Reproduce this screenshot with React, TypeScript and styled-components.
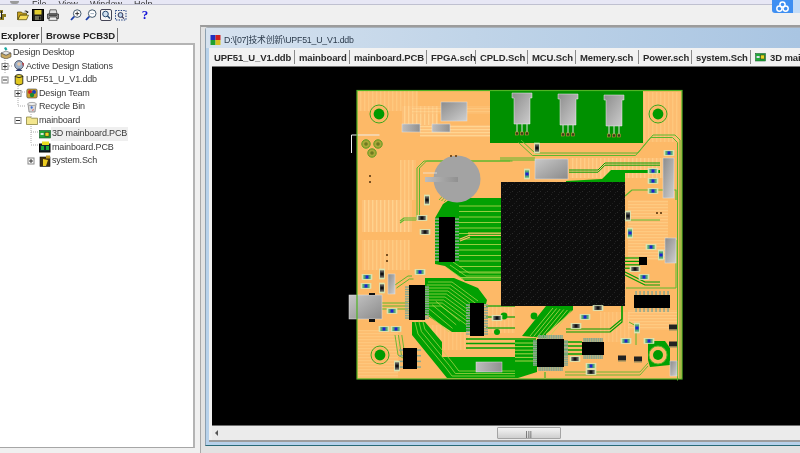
import React from "react";
import styled, { createGlobalStyle } from "styled-components";

const Global = createGlobalStyle`
  html, body { margin: 0; padding: 0; background: #f0f0f0; overflow: hidden; }
  #root { width: 800px; height: 453px; }
`;
const Page = styled.div`
  position: relative; width: 800px; height: 453px; overflow: hidden; background: #f0f0f0;
  display: flex; flex-direction: column; font-family: "Liberation Sans", "Noto Sans CJK SC", sans-serif; color: #222;
  filter: blur(0.3px);
`;
const MenuBar = styled.div`
  height: 4px; flex: none; background: #e7e7f5; border-bottom: 1px solid #bfc0d0; overflow: hidden;
  display: flex; align-items: flex-end; padding-left: 10px; gap: 12px; font-size: 9px; line-height: 9px; color: #333;
`;
const MenuItem = styled.span`
  transform: translateY(5px);
`;
const MenuBlob = styled.span`
  width: 9px; height: 3px; background: #9a9a9a; margin-right: 1px; border-radius: 0 0 5px 5px; flex: none;
`;
const Cloud = styled.div`
  position: absolute; right: 0; top: 0; width: 28px; height: 13px; display: flex; border-radius: 0 0 0 3px; overflow: hidden;
`;
const CloudMain = styled.div`
  width: 21px; background: #3f8ff2; display: flex; align-items: center; justify-content: center;
`;
const CloudEdge = styled.div`
  flex: 1; background: #c3dcf8;
`;
const Toolbar = styled.div`
  height: 21px; box-sizing: border-box; padding: 0 0 1px 17px; flex: none; display: flex; align-items: center; position: relative;
`;
const ToolGroup = styled.div<{ $left: number; $gap: number }>`
  display: flex; gap: ${p => p.$gap}px; margin-left: ${p => p.$left}px;
`;
const Tool = styled.svg`
  width: 12px; height: 12px; display: block; flex: none;
`;
const HelpMark = styled.span`
  font: bold 13px "Liberation Serif", serif; color: #1414d8; width: 8px; text-align: center; line-height: 12px;
`;
const Main = styled.div`
  flex: 1; display: flex; min-height: 0;
`;
const Side = styled.aside`
  width: 195px; flex: none; display: flex; flex-direction: column; padding-bottom: 5px;
`;
const SideTabs = styled.div`
  height: 17px; flex: none; display: flex; align-items: flex-end; gap: 2px;
`;
const SideTab = styled.div<{ $active?: boolean }>`
  height: ${p => (p.$active ? 17 : 14)}px; font: bold 9.5px "Liberation Sans", sans-serif;
  padding: ${p => (p.$active ? "0 3px 0 1px" : "0 3px 0 2px")}; display: flex; align-items: center; white-space: nowrap;
  border-right: 1px solid #777; color: #222;
  background: ${p => (p.$active ? "#f4f4f4" : "#f0f0f0")};
  width: ${p => (p.$active ? 37 : 68)}px;
  margin-bottom: ${p => (p.$active ? -1 : 1)}px;
`;
const TreeBox = styled.div`
  flex: 1; position: relative; background: #fff; padding-top: 1px; border-top: 2px solid #b4b4b4; border-right: 2px solid #b4b4b4; border-bottom: 1px solid #a6a6a6;
`;
const TreeLines = styled.svg`
  position: absolute; left: 0; top: -1px; width: 60px; height: 130px; pointer-events: none;
`;
const Row = styled.div<{ $level: number }>`
  position: relative; height: 13.5px; display: flex; align-items: center; padding-left: ${p => p.$level * 13}px; font-size: 9px; color: #3a3a3a; white-space: nowrap;
`;
const RowIcon = styled.svg`
  width: 12px; height: 12px; flex: none;
`;
const RowLabel = styled.span<{ $selected?: boolean }>`
  background: ${p => (p.$selected ? "#efefef" : "transparent")}; padding: 0 1px; line-height: 13.5px; letter-spacing: -0.15px;
`;
const Workspace = styled.section`
  flex: 1; min-width: 0; display: flex; flex-direction: column; border-top: 2px solid #9c9c9c; margin-left: 5px; margin-top: -1px;
  padding-left: 4px; border-left: 1px solid #a8a8a8; background: #e2e2e2; padding-top: 1px;
`;
const Win = styled.div`
  flex: 1; display: flex; flex-direction: column; min-height: 0; background: #b7d1ea; margin-bottom: 7px;
  border-bottom: 1px solid #2a6a76; border-left: 1px solid #8da0b0; border-top-left-radius: 3px; box-shadow: 0 -1px 0 #a8b0b8;
`;
const TitleBar = styled.div`
  height: 20px; flex: none; box-sizing: border-box; display: flex; align-items: center; gap: 3px; padding: 3px 0 0 4px; font-size: 8.8px; letter-spacing: -0.2px; color: #2c3b4c;
  background: linear-gradient(90deg, #d6e2ef 0%, #c0d4e8 45%, #a9c5e2 100%);
`;
const TitleIcon = styled.svg`
  width: 11px; height: 11px; flex: none;
`;
const WinBody = styled.div`
  flex: 1; display: flex; flex-direction: column; margin-left: 3px; margin-bottom: 3px; background: #f0f0f0; padding-left: 1px; min-height: 0;
  border-bottom: 2px solid #9d9d9d;
`;
const TabStrip = styled.div`
  height: 18px; flex: none; display: flex; align-items: center; overflow: hidden; white-space: nowrap; background: #f2f2f2;
`;
const DocTab = styled.div<{ $w: number; $last?: boolean }>`
  width: ${p => p.$w}px; flex: none; height: 14px; display: flex; align-items: center; gap: 4px; padding-left: 4px; box-sizing: border-box;
  font: bold 9.5px "Liberation Sans", sans-serif; letter-spacing: -0.1px; color: #2a2a2a; border-right: ${p => (p.$last ? "none" : "1px solid #8a8a8a")};
`;
const DocIcon = styled.svg`
  width: 11px; height: 9px; flex: none;
`;
const CanvasWrap = styled.div`
  flex: 1; min-height: 0; margin-left: 2px; border-top: 1px solid #777; background: #000; display: flex; overflow: hidden;
`;
const Board = styled.svg`
  width: 588px; height: 359px; display: block; flex: none;
`;
const HScroll = styled.div`
  height: 14px; flex: none; margin-left: 2px; background: #ebebeb; border-top: 1px solid #6f6f6f; position: relative; display: flex; align-items: center;
`;
const ArrowLeft = styled.span`
  width: 0; height: 0; border-top: 3px solid transparent; border-bottom: 3px solid transparent; border-right: 3px solid #555; margin-left: 3px;
`;
const Thumb = styled.div`
  margin-left: 279px; width: 64px; height: 12px; box-sizing: border-box; border: 1px solid #a4a4a4; border-radius: 1px; display: flex; align-items: center; justify-content: center;
  background: linear-gradient(#f4f4f4, #cfcfcf); font: 7px "Liberation Sans", sans-serif; color: #333; letter-spacing: 0.4px;
`;

const Folder = () => <Tool viewBox="0 0 12 12"><path d="M0.5 3h4l1 1.2h4v2H3L1 10.5H.5z" fill="#c8a01c" stroke="#4a4000" strokeWidth=".7"/><path d="M3 6.2h8.5L9.5 10.7H1z" fill="#f6dc58" stroke="#4a4000" strokeWidth=".7"/><path d="M7 2.2q2-1.6 3.6.4l.6-.6v2H9.4l.6-.6q-1.2-1.4-3-1.2z" fill="#222"/></Tool>;
const Save = () => <Tool viewBox="0 0 12 12"><rect x=".5" y=".5" width="11" height="11" fill="#20201a" stroke="#000"/><rect x="2.5" y="1" width="7" height="4.5" fill="#e4cf30"/><rect x="3" y="7" width="6" height="4" fill="#70705a"/><rect x="7" y="7.5" width="1.5" height="3" fill="#111"/></Tool>;
const Print = () => <Tool viewBox="0 0 12 12"><path d="M3 .8h6.2l.8 4H2.2z" fill="#ddd" stroke="#333" strokeWidth=".7"/><path d="M.6 5h10.8v4.6H.6z" fill="#999" stroke="#222" strokeWidth=".8"/><path d="M2.6 8h6.8l.8 3.4H1.8z" fill="#eee" stroke="#333" strokeWidth=".7"/><path d="M2 6.3h8" stroke="#333"/></Tool>;
const Lens = ({ mark }: { mark: "plus" | "minus" }) => <Tool viewBox="0 0 12 12"><circle cx="7.2" cy="4.6" r="3.8" fill="#fff" stroke="#30485c" strokeWidth=".9"/><path d="M4.2 7.6 1 11" stroke="#1a3ea8" strokeWidth="1.8"/>{mark === "plus" && <path d="M7.2 2.6v4M5.2 4.6h4" stroke="#222" strokeWidth=".9"/>}{mark === "minus" && <path d="M5.4 4.6h3.6" stroke="#9ab" strokeWidth=".9"/>}</Tool>;
const Fit = () => <Tool viewBox="0 0 12 12"><rect x=".5" y=".5" width="11" height="11" rx="1.5" fill="#f6f6f6" stroke="#445"/><circle cx="5.5" cy="5" r="2.8" fill="#cfe0f0" stroke="#274a70"/><path d="M7.5 7 10 9.6" stroke="#274a70" strokeWidth="1.4"/></Tool>;
const Sel = () => <Tool viewBox="0 0 12 12"><rect x=".5" y="1.5" width="10.5" height="9.5" fill="none" stroke="#1c3c80" strokeDasharray="1.4 1.2"/><circle cx="5.5" cy="6" r="2.4" fill="#bcd6ee" stroke="#335"/><path d="M7 7.6 9 9.6" stroke="#335" strokeWidth="1.2"/></Tool>;

const Ic = ({ kind }: { kind: string }) => {
  switch (kind) {
    case "desk": return <RowIcon viewBox="0 0 12 12"><path d="M1 6l5-2 5 2-5 2.4z" fill="#e6e6e6" stroke="#555" strokeWidth=".6"/><path d="M1 6v4l5 2 5-2V6L6 8.4z" fill="#c8a860" stroke="#444" strokeWidth=".6"/><path d="M4 1l2-1 1.5 2.4L5.4 3.6z" fill="#18a8a0"/></RowIcon>;
    case "station": return <RowIcon viewBox="0 0 12 12"><circle cx="6" cy="5" r="4.4" fill="#9db0c8" stroke="#334" strokeWidth=".7"/><circle cx="6" cy="4" r="1.8" fill="#e8c8a8"/><path d="M2.5 11q3.5-5 7 0z" fill="#304070"/><path d="M9 2.5l2 1-1 3z" fill="#c03030"/></RowIcon>;
    case "db": return <RowIcon viewBox="0 0 12 12"><ellipse cx="6" cy="2.4" rx="3.8" ry="1.8" fill="#eedc40" stroke="#111" strokeWidth=".8"/><path d="M2.2 2.4v7.4q3.8 2.6 7.6 0V2.4q-3.8 2.4-7.6 0z" fill="#e2c820" stroke="#111" strokeWidth=".8"/></RowIcon>;
    case "team": return <RowIcon viewBox="0 0 12 12"><rect x=".8" y="2" width="10.4" height="9" rx="1.5" fill="#caa030" stroke="#444" strokeWidth=".6"/><circle cx="4" cy="5" r="2" fill="#d02020"/><circle cx="8" cy="5" r="2" fill="#1840b8"/><circle cx="6" cy="8" r="2.2" fill="#1a8a30"/></RowIcon>;
    case "bin": return <RowIcon viewBox="0 0 12 12"><path d="M2 3h8l-1 8H3z" fill="#d8d8d8" stroke="#777" strokeWidth=".7"/><ellipse cx="6" cy="3" rx="4.4" ry="1.6" fill="#eee" stroke="#777" strokeWidth=".6"/><path d="M5 5l2 1-1 2-1.5-1z" fill="#4070d8"/><path d="M7 8l1 1-2 1z" fill="#d84040"/></RowIcon>;
    case "folder": return <RowIcon viewBox="0 0 12 12"><path d="M.5 3h4l1 1.2h6v6.3H.5z" fill="#f3e68e" stroke="#8c8440" strokeWidth=".8"/></RowIcon>;
    case "pcb3d": return <RowIcon viewBox="0 0 12 12"><rect x=".5" y="2.5" width="11" height="7.5" fill="#22a83a" stroke="#0c5020" strokeWidth=".6"/><rect x="6" y="4.2" width="4" height="4" fill="#e8d820" stroke="#222" strokeWidth=".6"/><rect x="1.6" y="5" width="3" height="2" fill="#d8e8d8"/></RowIcon>;
    case "pcb": return <RowIcon viewBox="0 0 12 12"><rect x=".5" y="3" width="10.5" height="8" fill="#102830" stroke="#000"/><path d="M2 5h3v4H2zM7 5h3v4H7z" fill="#1ca838"/><rect x="3" y="0.5" width="7" height="3.5" fill="#e8dc20"/></RowIcon>;
    default: return <RowIcon viewBox="0 0 12 12"><rect x="1" y="2" width="10" height="9.4" fill="#403010" stroke="#111" strokeWidth=".6"/><path d="M4 4l5 1-2 6H4z" fill="#eccc20"/><path d="M7 0.5h4v3H7z" fill="#c09a20"/></RowIcon>;
  }
};

const treeRows = [
  { level: 0, kind: "desk", label: "Design Desktop" },
  { level: 1, kind: "station", label: "Active Design Stations" },
  { level: 1, kind: "db", label: "UPF51_U_V1.ddb" },
  { level: 2, kind: "team", label: "Design Team" },
  { level: 2, kind: "bin", label: "Recycle Bin" },
  { level: 2, kind: "folder", label: "mainboard" },
  { level: 3, kind: "pcb3d", label: "3D mainboard.PCB", selected: true },
  { level: 3, kind: "pcb", label: "mainboard.PCB" },
  { level: 3, kind: "sch", label: "system.Sch" },
];

const docTabs = [
  ["UPF51_U_V1.ddb", 85], ["mainboard", 55], ["mainboard.PCB", 77], ["FPGA.sch", 49], ["CPLD.Sch", 52],
  ["MCU.Sch", 48], ["Memery.sch", 63], ["Power.sch", 53], ["system.Sch", 59],
] as const;

// ---- PCB artwork ----
const G = "#02a002", L = "#5db82e", O = "#fdb967", T = "#bcd850";
type Pt = [number, number];
const poly = (p: Pt[]) => p.map(q => q.join(",")).join(" ");
const Bundle = ({ pts, n, dx, dy, w = 1.5, c = G }: { pts: Pt[]; n: number; dx: number; dy: number; w?: number; c?: string }) => (
  <g fill="none" stroke={c} strokeWidth={w} strokeLinejoin="round">
    {Array.from({ length: n }, (_, i) => <polyline key={i} points={poly(pts.map(([x, y]) => [x + dx * i, y + dy * i]))} />)}
  </g>
);
const Smd = ({ x, y, v, dark }: { x: number; y: number; v?: boolean; dark?: boolean }) => (
  <g transform={`translate(${x} ${y})${v ? " rotate(90)" : ""}`}>
    <rect x={-5} y={-2.5} width={10} height={5} fill="#d4e4ac" stroke="#d8e8c0" strokeWidth=".6" />
    <rect x={-3.6} y={-2} width={7.2} height={4} fill={dark ? "#555" : "#50a878"} />
    <rect x={-1.5} y={-1.6} width={3} height={3.2} fill={dark ? "#111" : "#2020d0"} />
  </g>
);
const Ic8 = ({ x, y, w, h, px = 0, py = 0 }: { x: number; y: number; w: number; h: number; px?: number; py?: number }) => (
  <g>
    {py > 0 && Array.from({ length: py }, (_, i) => {
      const yy = y + 2 + (i * (h - 4)) / Math.max(1, py - 1);
      return <g key={i}><rect x={x - 4} y={yy - 0.7} width={4} height={1.5} fill="#8aa890" /><rect x={x + w} y={yy - 0.7} width={4} height={1.5} fill="#8aa890" /></g>;
    })}
    {px > 0 && Array.from({ length: px }, (_, i) => {
      const xx = x + 2 + (i * (w - 4)) / Math.max(1, px - 1);
      return <g key={i}><rect x={xx - 0.7} y={y - 4} width={1.5} height={4} fill="#8aa890" /><rect x={xx - 0.7} y={y + h} width={1.5} height={4} fill="#8aa890" /></g>;
    })}
    <rect x={x} y={y} width={w} height={h} fill="#000" />
  </g>
);
const Hole = ({ x, y }: { x: number; y: number }) => (
  <g>
    <circle cx={x} cy={y} r={9} fill="#fdb967" stroke="#3aa81e" strokeWidth="1" />
    <circle cx={x} cy={y} r={5.4} fill="#009a00" />
  </g>
);
const Metal = ({ x, y, w, h, id = "metal" }: { x: number; y: number; w: number; h: number; id?: string }) => (
  <rect x={x} y={y} width={w} height={h} fill={`url(#${id})`} stroke="#e4e4e4" strokeWidth=".5" />
);
const Connector = ({ x, y }: { x: number; y: number }) => (
  <g>
    <path d={`M${x} ${y}h20v5h-2v26h-16v-26h-2z`} fill="url(#metal)" stroke="#eee" strokeWidth=".5" />
    {[5, 10, 15].map(d => <g key={d}><rect x={x + d - 0.5} y={y + 31} width={1} height={8} fill="#e0e0e0" /><rect x={x + d - 1.5} y={y + 39} width={3} height={3} fill="#3a3a1a" stroke="#d8a040" strokeWidth=".5" /></g>)}
  </g>
);

const PcbArt = () => (
  <Board viewBox="212 67 588 359">
    <defs>
      <pattern id="vs" width="4" height="4" patternUnits="userSpaceOnUse"><rect width="4" height="4" fill="#fdc077" /><rect width="1.4" height="4" fill="#ffd28e" /></pattern>
      <pattern id="hs" width="4" height="3" patternUnits="userSpaceOnUse"><rect width="4" height="3" fill="#fdc077" /><rect width="4" height="1.2" fill="#ffd592" /></pattern>
      <pattern id="speck" width="7" height="7" patternUnits="userSpaceOnUse"><rect width="7" height="7" fill="#0d0d0d" /><rect x="1" y="2" width="1" height="1" fill="#2a2a2a" /><rect x="5" y="5" width="1" height="1" fill="#242424" /><rect x="3" y="0" width="1" height="1" fill="#1c1c1c" /><rect x="6" y="3" width="1" height="1" fill="#1f1f1f" /></pattern>
      <linearGradient id="metal" x1="0" y1="0" x2="1" y2="1"><stop offset="0" stopColor="#8c8c8c" /><stop offset=".6" stopColor="#b4b4b4" /><stop offset="1" stopColor="#cfcfcf" /></linearGradient>
      <linearGradient id="metal2" x1="0" y1="0" x2="1" y2="0"><stop offset="0" stopColor="#bdbdbd" /><stop offset="1" stopColor="#909090" /></linearGradient>
      <linearGradient id="metal3" x1="0" y1="0" x2="1" y2="1"><stop offset="0" stopColor="#c8c8c8" /><stop offset="1" stopColor="#8a8a8a" /></linearGradient>
    </defs>

    <rect x="357" y="90" width="325" height="289" fill={O} />
    <rect x="358" y="91" width="60" height="20" fill="url(#vs)" opacity=".6" />
    <rect x="402" y="106" width="36" height="20" fill="url(#vs)" />
    <rect x="412" y="106" width="78" height="8" fill="url(#hs)" opacity=".5" />
    <rect x="420" y="125" width="70" height="12" fill="url(#hs)" />
    <rect x="400" y="160" width="16" height="40" fill="url(#vs)" opacity=".7" />
    <rect x="362" y="200" width="50" height="32" fill="url(#vs)" />
    <rect x="362" y="240" width="48" height="30" fill="url(#vs)" opacity=".7" />
    <rect x="358" y="330" width="40" height="48" fill="url(#hs)" opacity=".5" />
    <rect x="570" y="158" width="95" height="20" fill="url(#vs)" opacity=".8" />
    <rect x="640" y="92" width="40" height="50" fill="url(#vs)" opacity=".55" />
    <rect x="628" y="200" width="40" height="60" fill="url(#hs)" opacity=".6" />
    <rect x="628" y="310" width="50" height="20" fill="url(#hs)" opacity=".6" />
    <rect x="430" y="325" width="40" height="25" fill="url(#vs)" opacity=".45" />
    <rect x="486" y="305" width="29" height="28" fill="url(#vs)" opacity=".5" />
    <rect x="600" y="312" width="30" height="30" fill="url(#vs)" opacity=".45" />

    <rect x="490" y="90" width="153" height="53" fill="#009000" />

    {/* perimeter traces */}
    <Bundle pts={[[521, 140], [535, 153], [638, 153], [653, 135], [675, 135], [680, 140], [680, 378]]} n={2} dx={-2.5} dy={2.5} w={1} c={L} />
    <Bundle pts={[[417, 220], [417, 168], [424, 161], [510, 161]]} n={2} dx={2.5} dy={0} w={1} c={L} />
    <Bundle pts={[[500, 160], [535, 160]]} n={2} dx={0} dy={-2} w={1} c={L} />
    <Bundle pts={[[625, 196], [632, 190], [676, 190], [676, 200]]} n={1} dx={0} dy={0} w={1.2} c={L} />
    <Bundle pts={[[625, 220], [660, 220]]} n={1} dx={0} dy={0} w={1} c={L} />
    <Bundle pts={[[569, 170], [598, 170], [605, 163], [660, 163]]} n={2} dx={0} dy={2.2} w={1} c={G} />
    <polygon points={poly([[566, 181], [602, 179], [611, 170], [660, 170], [660, 173], [625, 173], [625, 182], [566, 182]])} fill={G} />

    {/* IC1 to BGA bus */}
    <polygon points={poly([[435, 218], [443, 204], [452, 198], [501, 198], [501, 281], [465, 281], [445, 266], [435, 264]])} fill={G} />
    <Bundle pts={[[459, 206], [501, 206]]} n={14} dx={0} dy={5.5} w={0.8} c={T} />
    <Bundle pts={[[468, 233], [501, 233]]} n={2} dx={0} dy={2.4} w={1.2} c={O} />
    <Bundle pts={[[460, 239], [470, 235]]} n={2} dx={0} dy={2} w={1.2} c={O} />
    <Bundle pts={[[447, 268], [463, 279], [501, 279]]} n={3} dx={3} dy={-3} w={.7} c={T} />
    <Bundle pts={[[439, 200], [448, 190]]} n={3} dx={2.5} dy={1} w={.9} c={L} />

    {/* IC2 fan-out */}
    <polygon points={poly([[425, 278], [454, 278], [478, 288], [487, 300], [486, 304], [470, 304], [470, 332], [452, 332], [428, 316], [425, 316]])} fill={G} />
    <Bundle pts={[[428, 282], [452, 282], [478, 301]]} n={9} dx={-1.4} dy={3} w={.7} c={T} />
    <Bundle pts={[[425, 312], [449, 332]]} n={4} dx={3.6} dy={-3.6} w={.7} c={T} />
    <Bundle pts={[[486, 306], [515, 306]]} n={3} dx={0} dy={11} w={1.2} c={G} />
    {/* bottom pour */}
    <polygon points={poly([[412, 322], [425, 322], [442, 342], [442, 357], [515, 357], [515, 378], [447, 378], [412, 335]])} fill={G} />
    <Bundle pts={[[415, 322], [418, 334], [446, 368], [452, 376], [515, 376]]} n={3} dx={3.4} dy={-2.5} w={.7} c={T} />
    <Bundle pts={[[466, 339], [536, 339]]} n={3} dx={0} dy={4.5} w={1.4} c={G} />

    {/* QFP area */}
    <polygon points={poly([[522, 336], [546, 306], [573, 306], [573, 310], [546, 334], [546, 338]])} fill={G} />
    <Bundle pts={[[530, 336], [553, 308]]} n={6} dx={3.6} dy={.5} w={.8} c={T} />
    <polygon points={poly([[515, 340], [537, 340], [537, 372], [518, 378], [515, 378]])} fill={G} />
    <Bundle pts={[[515, 343], [536, 343]]} n={6} dx={0} dy={3.6} w={.9} c={T} />
    <Bundle pts={[[564, 342], [582, 342]]} n={4} dx={0} dy={4} w={1.5} c={G} />
    <Bundle pts={[[566, 332], [610, 332], [622, 322], [622, 306]]} n={2} dx={0} dy={-3} w={1.2} c={G} />
    <Bundle pts={[[545, 372], [545, 378]]} n={1} dx={0} dy={0} w={1.4} c={L} />
    <Bundle pts={[[565, 375], [640, 375], [648, 366]]} n={2} dx={0} dy={-3} w={.9} c={L} />

    {/* right side */}
    <Bundle pts={[[625, 258], [640, 258]]} n={4} dx={0} dy={3.4} w={1.2} c={G} />
    <Bundle pts={[[625, 275], [645, 285], [660, 285]]} n={2} dx={0} dy={-3} w={1.2} c={G} />
    <Bundle pts={[[626, 288], [676, 288], [676, 240]]} n={1} dx={0} dy={0} w={1} c={L} />
    <polygon points={poly([[648, 341], [665, 341], [670, 348], [670, 365], [650, 367], [648, 360]])} fill={G} />
    <circle cx="658" cy="355" r="9" fill={O} stroke={L} strokeWidth="1" />
    <circle cx="658" cy="355" r="5" fill="#009a00" />
    <Bundle pts={[[629, 322], [636, 326], [636, 345]]} n={1} dx={0} dy={0} w={1} c={L} />

    {/* left side small traces */}
    <Bundle pts={[[382, 303], [408, 303]]} n={3} dx={0} dy={3} w={1} c={L} />
    <Bundle pts={[[395, 285], [408, 276], [412, 276]]} n={2} dx={1.5} dy={3} w={1} c={L} />
    <Bundle pts={[[395, 335], [398, 355], [403, 358]]} n={3} dx={3.4} dy={0} w={.9} c={L} />
    <Bundle pts={[[400, 221], [404, 218], [416, 218]]} n={2} dx={0} dy={2} w={1.1} c={L} />

    {/* metal parts */}
    <Metal x={441} y={102} w={26} h={19} id="metal" />
    <Metal x={402} y={124} w={18} h={8} id="metal2" />
    <Metal x={432} y={124} w={18} h={8} id="metal2" />
    <circle cx="457" cy="179" r="23.5" fill="#a3a3a3" />
    <rect x="425" y="177" width="33" height="5" fill="url(#metal2)" />
    <path d="M423 173h14" stroke="#eee" strokeWidth=".7" />
    <Metal x={535} y={159} w={33} h={20} id="metal3" />
    <Metal x={663} y={158} w={11} h={40} />
    <Metal x={665} y={238} w={11} h={25} />
    <Metal x={670} y={361} w={7} h={15} />
    <Metal x={349} y={295} w={33} h={24} id="metal3" />
    <rect x="369" y="293" width="6" height="2" fill="#111" />
    <rect x="369" y="319" width="6" height="3" fill="#111" />
    <Metal x={388} y={274} w={7} h={20} />
    <Metal x={476} y={362} w={26} h={10} id="metal2" />
    <Connector x={512} y={93} />
    <Connector x={558} y={94} />
    <Connector x={604} y={95} />

    <rect x="501" y="182" width="124" height="124" fill="url(#speck)" />

    {/* chips */}
    <Ic8 x={439} y={217} w={16} h={45} py={14} />
    <Ic8 x={409} y={285} w={16} h={35} py={14} />
    <Ic8 x={470} y={303} w={14} h={33} py={12} />
    <Ic8 x={403} y={348} w={14} h={21} py={4} />
    <Ic8 x={537} y={339} w={27} h={28} px={14} py={14} />
    <Ic8 x={582} y={342} w={22} h={13} px={11} />
    <Ic8 x={634} y={295} w={36} h={13} px={9} />
    <rect x="639" y="257" width="8" height="8" fill="#000" />
    {[[622, 358], [638, 359], [673, 327], [673, 344]].map(([x, y]) => <g key={x + "-" + y}><rect x={x - 4} y={y - 2.5} width={8} height={5} fill="#222" /><path d={`M${x - 4} ${y + 3}h8`} stroke="#8a8a60" strokeWidth="1" /></g>)}

    <Hole x={379} y={114} />
    <Hole x={380} y={355} />
    <Hole x={658} y={114} />
    <circle cx="504" cy="316" r="3.4" fill={G} />
    <circle cx="497" cy="332" r="3" fill={G} />
    <circle cx="534" cy="316" r="3.4" fill={G} />
    {[[366, 144], [378, 144], [372, 153]].map(([x, y]) => <g key={x + "_" + y}><circle cx={x} cy={y} r={4.2} fill="#a8a838" stroke="#5a9a20" strokeWidth="1" /><circle cx={x} cy={y} r={1.8} fill="#6f7a20" /></g>)}
    <path d="M351.5 153v-18h28" fill="none" stroke="#eee" strokeWidth="1" />
    {[[369, 175], [369, 181], [450, 155], [455, 155], [386, 254], [386, 260], [660, 212], [656, 212]].map(([x, y]) => <rect key={x + "/" + y} x={x} y={y} width={2} height={2} fill="#7a5020" />)}

    {[[427, 200, 1, 1], [422, 218, 0, 1], [425, 232, 0, 1], [367, 277, 0, 0], [366, 286, 0, 0], [382, 274, 1, 1], [382, 288, 1, 1], [420, 272, 0, 0], [392, 311, 0, 0], [384, 329, 0, 0], [396, 329, 0, 0], [397, 366, 1, 1], [497, 318, 0, 1], [537, 148, 1, 1], [527, 174, 1, 0], [669, 153, 0, 0], [653, 171, 0, 0], [653, 181, 0, 0], [653, 191, 0, 0], [628, 216, 1, 1], [630, 233, 1, 0], [651, 247, 0, 0], [661, 255, 1, 0], [635, 269, 0, 1], [644, 277, 0, 0], [585, 317, 0, 0], [576, 326, 0, 1], [637, 328, 1, 0], [626, 341, 0, 0], [649, 341, 0, 0], [575, 359, 0, 1], [591, 366, 0, 0], [591, 372, 0, 1], [598, 308, 0, 1]].map(([x, y, v, d]) => (
      <Smd key={x + ":" + y} x={x} y={y} v={!!v} dark={!!d} />
    ))}

    <rect x="357" y="90.5" width="325" height="288.5" fill="none" stroke="#4fb424" strokeWidth="1.2" />
  </Board>
);

export default function App() {
  return (
    <Page>
      <Global />
      <MenuBar>
        <MenuBlob />
        <MenuItem>File</MenuItem><MenuItem>View</MenuItem><MenuItem>Window</MenuItem><MenuItem>Help</MenuItem>
      </MenuBar>
      <Cloud>
        <CloudMain>
          <svg width="13" height="11" viewBox="0 0 13 11"><g fill="none" stroke="#fff" strokeWidth="1.5"><circle cx="6.5" cy="3.5" r="2.6" /><circle cx="3.4" cy="7.6" r="2.6" /><circle cx="9.6" cy="7.6" r="2.6" /></g></svg>
        </CloudMain>
        <CloudEdge />
      </Cloud>
      <Toolbar>
        <svg width="6" height="10" viewBox="0 0 6 10" style={{ position: "absolute", left: 0, top: 5 }}><path d="M0 0h3v3H0zM2 4h4v3H2zM0 7h4v3H0z" fill="#8a7a20" /><path d="M1 1h1v8H1z" fill="#222" /></svg>
        <ToolGroup $left={0} $gap={3}><Folder /><Save /><Print /></ToolGroup>
        <ToolGroup $left={11} $gap={3}><Lens mark="plus" /><Lens mark="minus" /><Fit /><Sel /></ToolGroup>
        <ToolGroup $left={14} $gap={0}><HelpMark>?</HelpMark></ToolGroup>
      </Toolbar>
      <Main>
        <Side>
          <SideTabs>
            <SideTab $active>Explorer</SideTab>
            <SideTab>Browse PCB3D</SideTab>
          </SideTabs>
          <TreeBox>
            <TreeLines viewBox="0 0 60 130">
              <g stroke="#aaa" strokeWidth="1" strokeDasharray="1 1" fill="none">
                <path d="M5 14V30M5 22h8M18 30V62M18 48h8M18 62h8M31 70V100M31 88h8M31 101h8" />
              </g>
              <g fill="#fff" stroke="#888" strokeWidth="1">
                <rect x="2" y="19.5" width="6" height="6" /><rect x="2" y="33" width="6" height="6" /><rect x="15" y="46.5" width="6" height="6" /><rect x="15" y="73.5" width="6" height="6" /><rect x="28" y="114" width="6" height="6" />
              </g>
              <g stroke="#333" strokeWidth="1">
                <path d="M3 22.5h4M3 36h4M16 49.5h4M16 76.5h4M29 117h4" /><path d="M5 20.5v4M18 47.5v4M31 115v4" />
              </g>
            </TreeLines>
            {treeRows.map(r => (
              <Row key={r.label} $level={r.level}>
                <Ic kind={r.kind} />
                <RowLabel $selected={r.selected}>{r.label}</RowLabel>
              </Row>
            ))}
          </TreeBox>
        </Side>
        <Workspace>
          <Win>
            <TitleBar>
              <TitleIcon viewBox="0 0 11 11"><rect x=".5" y="1" width="5" height="5" fill="#2030c0" /><rect x="5.5" y="1" width="5" height="5" fill="#d02020" /><rect x=".5" y="6" width="5" height="5" fill="#20a030" /><rect x="5.5" y="6" width="5" height="5" fill="#d8c020" /></TitleIcon>
              <span>D:\[07]技术创新\UPF51_U_V1.ddb</span>
            </TitleBar>
            <WinBody>
              <TabStrip>
                {docTabs.map(([t, w]) => <DocTab key={t} $w={w}>{t}</DocTab>)}
                <DocTab $w={60} $last>
                  <DocIcon viewBox="0 0 11 9"><rect x=".5" y=".5" width="10" height="7.5" fill="#22a83a" stroke="#0c5020" strokeWidth=".5" /><rect x="5.5" y="2" width="4" height="4" fill="#e8d820" stroke="#222" strokeWidth=".5" /><rect x="1.6" y="3" width="3" height="2" fill="#dde" /></DocIcon>
                  3D mainboard.PCB
                </DocTab>
              </TabStrip>
              <CanvasWrap><PcbArt /></CanvasWrap>
              <HScroll>
                <ArrowLeft />
                <Thumb>|||</Thumb>
              </HScroll>
            </WinBody>
          </Win>
        </Workspace>
      </Main>
    </Page>
  );
}
